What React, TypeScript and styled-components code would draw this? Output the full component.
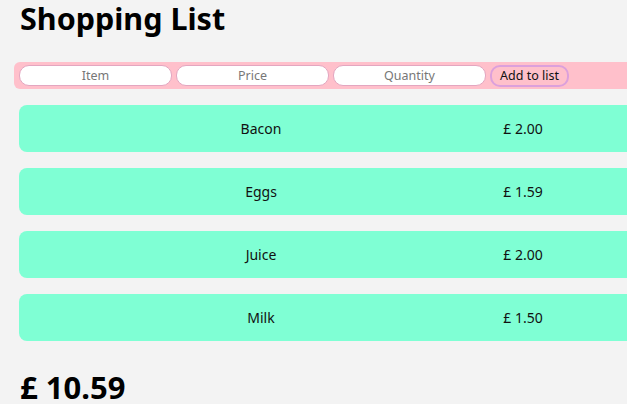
import React from "react";
import styled, { createGlobalStyle } from "styled-components";

const Global = createGlobalStyle`
  html, body { margin: 0; padding: 0; background: #f3f3f3; overflow: hidden; }
  body { font-family: "Noto Sans", "Open Sans", sans-serif; color: #111; }
`;

const Page = styled.div`
  width: 700px;
  padding-left: 14px;
`;

const Title = styled.h1`
  margin: 0;
  padding: 0 0 0 6px;
  height: 62px;
  font-size: 30.5px;
  line-height: 36px;
  font-weight: 700;
  color: #000;
`;

const Form = styled.form`
  display: flex;
  align-items: center;
  gap: 4px;
  height: 27px;
  padding: 0 5px;
  background: #ffc0cb;
  border-radius: 6px 0 0 6px;
`;

const Field = styled.input`
  box-sizing: border-box;
  width: 153px;
  height: 21px;
  border: 1px solid #e3a6c0;
  border-radius: 10px;
  background: #fff;
  text-align: center;
  font-family: inherit;
  font-size: 12.5px;
  padding: 0;
  &::placeholder { color: #777; }
`;

const AddButton = styled.button`
  box-sizing: border-box;
  width: 79px;
  height: 22px;
  border: 2px solid #dca0dc;
  border-radius: 10px;
  background: #ffc0cb;
  font-family: inherit;
  font-size: 12.5px;
  color: #111;
  padding: 0;
`;

const List = styled.div`
  display: flex;
  flex-direction: column;
  gap: 16px;
  margin: 16px 0 0 5px;
`;

const Row = styled.div`
  display: grid;
  grid-template-columns: 412px 112px;
  align-items: center;
  height: 47px;
  padding-left: 36px;
  background: #7fffd4;
  border-radius: 8px 0 0 8px;
  font-size: 14px;
`;

const Cell = styled.span`
  text-align: center;
`;

const Total = styled.h2`
  margin: 28px 0 0 6px;
  font-size: 31px;
  line-height: 36px;
  font-weight: 700;
  color: #000;
`;

const items = [
  { name: "Bacon", price: "2.00" },
  { name: "Eggs", price: "1.59" },
  { name: "Juice", price: "2.00" },
  { name: "Milk", price: "1.50" },
];

export default function App() {
  return (
    <Page>
      <Global />
      <Title>Shopping List</Title>
      <Form onSubmit={(e) => e.preventDefault()}>
        <Field placeholder="Item" />
        <Field placeholder="Price" />
        <Field placeholder="Quantity" />
        <AddButton type="submit">Add to list</AddButton>
      </Form>
      <List>
        {items.map((it) => (
          <Row key={it.name}>
            <Cell>{it.name}</Cell>
            <Cell>£ {it.price}</Cell>
          </Row>
        ))}
      </List>
      <Total>£ 10.59</Total>
    </Page>
  );
}
